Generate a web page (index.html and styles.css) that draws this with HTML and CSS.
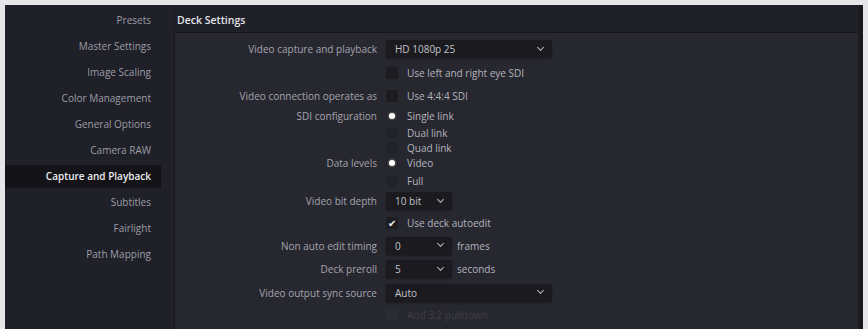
FILE: index.html
```html
<!DOCTYPE html>
<html lang="en">
<head>
  <meta charset="UTF-8" />
  <title>Deck Settings</title>
  <link rel="stylesheet" href="styles.css">
</head>
<body>

  <div class="window">

    <!-- Sidebar -->
    <div class="sidebar">
      <a>Presets</a>
      <a>Master Settings</a>
      <a>Image Scaling</a>
      <a>Color Management</a>
      <a>General Options</a>
      <a>Camera RAW</a>
      <a class="active">Capture and Playback</a>
      <a>Subtitles</a>
      <a>Fairlight</a>
      <a>Path Mapping</a>
    </div>

    <!-- Main panel -->
    <div class="main">
      <div class="main-title">Deck Settings</div>

      <div class="panel">
        <div class="form">
          <label>Video capture and playback</label>
          <div class="ctl"><div class="select wide"><span>HD 1080p 25</span><i class="chev"></i></div></div>

          <label></label>
          <div class="ctl"><span class="box"></span><span>Use left and right eye SDI</span></div>

          <label>Video connection operates as</label>
          <div class="ctl"><span class="box"></span><span>Use 4:4:4 SDI</span></div>

          <label>SDI configuration</label>
          <div class="ctl"><span class="radio on"></span><span>Single link</span></div>

          <label></label>
          <div class="ctl"><span class="radio"></span><span>Dual link</span></div>

          <label></label>
          <div class="ctl"><span class="radio"></span><span>Quad link</span></div>

          <label>Data levels</label>
          <div class="ctl"><span class="radio on"></span><span>Video</span></div>

          <label></label>
          <div class="ctl"><span class="radio"></span><span>Full</span></div>

          <label>Video bit depth</label>
          <div class="ctl"><div class="select"><span>10 bit</span><i class="chev"></i></div></div>

          <label></label>
          <div class="ctl"><span class="box checked">&#10004;</span><span>Use deck autoedit</span></div>

          <label>Non auto edit timing</label>
          <div class="ctl"><div class="select"><span>0</span><i class="chev"></i></div><span class="unit">frames</span></div>

          <label>Deck preroll</label>
          <div class="ctl"><div class="select"><span>5</span><i class="chev"></i></div><span class="unit">seconds</span></div>

          <label>Video output sync source</label>
          <div class="ctl"><div class="select wide"><span>Auto</span><i class="chev"></i></div></div>

          <label></label>
          <div class="ctl disabled"><span class="box"></span><span>Add 3:2 pulldown</span></div>
        </div>
      </div>
    </div>

  </div>

</body>
</html>
```

FILE: styles.css
```css
* {
  box-sizing: border-box;
}

body {
  margin: 0;
  background: #e6e6e8;
  font-family: 'Open Sans', 'Noto Sans', sans-serif;
  font-size: 10px;
  overflow: hidden;
}

.window {
  margin: 5px 0 0 5px;
  width: 858px;
  height: 324px;
  display: flex;
  background: #1f2028;
  border-right: 4px solid #18181d;
}

/* Sidebar */
.sidebar {
  width: 170px;
  padding-top: 4px;
  display: flex;
  flex-direction: column;
  gap: 3px;
  border-right: 1px solid #18181d;
}

.sidebar a {
  height: 23px;
  line-height: 23px;
  margin-right: 13px;
  padding-right: 10px;
  text-align: right;
  color: #9d9da6;
}

.sidebar a.active {
  background: #141418;
  color: #ececf0;
  font-weight: 600;
}

/* Main panel */
.main {
  flex: 1;
  display: flex;
  flex-direction: column;
  padding-right: 1px;
}

.main-title {
  height: 27px;
  line-height: 30px;
  padding-left: 2px;
  color: #e4e4ea;
  font-weight: 600;
  font-size: 10.5px;
}

.panel {
  flex: 1;
  background: #272730;
  border-top: 1px solid #17171b;
  padding-top: 4px;
}

.form {
  display: grid;
  grid-template-columns: 202px 1fr;
  grid-template-rows: 24.5px 23.5px 21.5px 18.5px 15.5px 15px 15.5px 19px 22px 22px 23px 24px 23px 22px;
  column-gap: 9px;
}

.form label {
  display: flex;
  align-items: center;
  justify-content: flex-end;
  color: #a4a4ad;
}

.ctl {
  display: flex;
  align-items: center;
  gap: 9px;
  color: #b4b4bc;
}

.select {
  width: 66px;
  height: 18px;
  background: #1a1a1f;
  border-radius: 2px;
  display: flex;
  align-items: center;
  justify-content: space-between;
  padding: 0 9px;
  color: #c2c2c8;
  box-shadow: 0 1px 2px rgba(0, 0, 0, 0.3);
}

.select.wide {
  width: 166px;
}

.chev {
  width: 5px;
  height: 5px;
  border-right: 1.5px solid #b8b8c0;
  border-bottom: 1.5px solid #b8b8c0;
  transform: translateY(-2px) rotate(45deg);
}

.unit {
  margin-left: -4px;
}

.box {
  width: 12px;
  height: 12px;
  background: #1c1c21;
  border-radius: 1px;
  display: flex;
  align-items: center;
  justify-content: center;
  color: #f0f0f0;
  font-size: 10px;
}

.radio {
  width: 12px;
  height: 12px;
  border-radius: 50%;
  background: #22222a;
  display: flex;
  align-items: center;
  justify-content: center;
}

.radio.on::after {
  content: "";
  width: 6px;
  height: 6px;
  border-radius: 50%;
  background: #ffffff;
  box-shadow: 0 0 3px rgba(255, 255, 255, 0.6);
}

.ctl.disabled {
  color: #3e3e48;
}

.ctl.disabled .box {
  background: #2b2b34;
}
```
